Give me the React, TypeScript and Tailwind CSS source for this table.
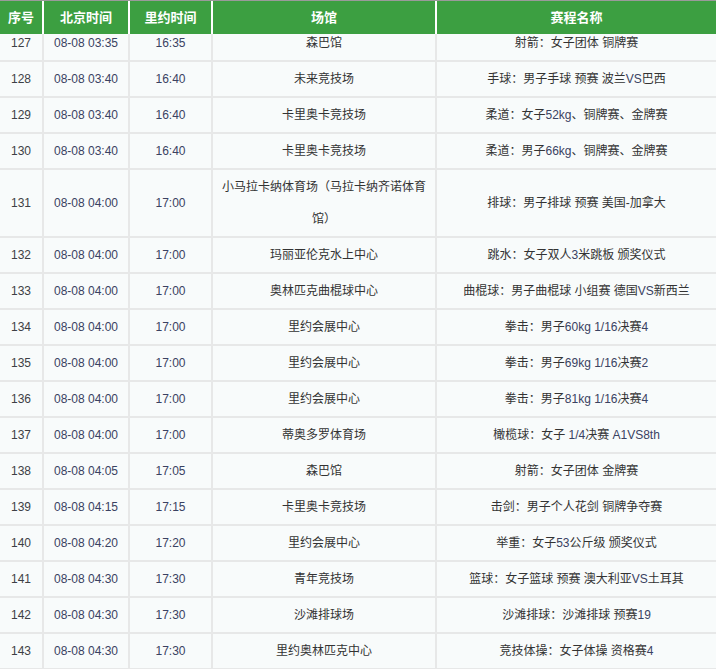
import React from "react";

type Row = [string, string, string, string, string];

const rows: Row[] = [
  ["127", "08-08 03:35", "16:35", "森巴馆", "射箭：女子团体 铜牌赛"],
  ["128", "08-08 03:40", "16:40", "未来竞技场", "手球：男子手球 预赛 波兰VS巴西"],
  ["129", "08-08 03:40", "16:40", "卡里奥卡竞技场", "柔道：女子52kg、铜牌赛、金牌赛"],
  ["130", "08-08 03:40", "16:40", "卡里奥卡竞技场", "柔道：男子66kg、铜牌赛、金牌赛"],
  ["131", "08-08 04:00", "17:00", "小马拉卡纳体育场（马拉卡纳齐诺体育馆）", "排球：男子排球 预赛 美国-加拿大"],
  ["132", "08-08 04:00", "17:00", "玛丽亚伦克水上中心", "跳水：女子双人3米跳板 颁奖仪式"],
  ["133", "08-08 04:00", "17:00", "奥林匹克曲棍球中心", "曲棍球：男子曲棍球 小组赛 德国VS新西兰"],
  ["134", "08-08 04:00", "17:00", "里约会展中心", "拳击：男子60kg 1/16决赛4"],
  ["135", "08-08 04:00", "17:00", "里约会展中心", "拳击：男子69kg 1/16决赛2"],
  ["136", "08-08 04:00", "17:00", "里约会展中心", "拳击：男子81kg 1/16决赛4"],
  ["137", "08-08 04:00", "17:00", "蒂奥多罗体育场", "橄榄球：女子 1/4决赛 A1VS8th"],
  ["138", "08-08 04:05", "17:05", "森巴馆", "射箭：女子团体 金牌赛"],
  ["139", "08-08 04:15", "17:15", "卡里奥卡竞技场", "击剑：男子个人花剑 铜牌争夺赛"],
  ["140", "08-08 04:20", "17:20", "里约会展中心", "举重：女子53公斤级 颁奖仪式"],
  ["141", "08-08 04:30", "17:30", "青年竞技场", "篮球：女子篮球 预赛 澳大利亚VS土耳其"],
  ["142", "08-08 04:30", "17:30", "沙滩排球场", "沙滩排球：沙滩排球 预赛19"],
  ["143", "08-08 04:30", "17:30", "里约奥林匹克中心", "竞技体操：女子体操 资格赛4"],
];

function Mixed({ text }: { text: string }) {
  const parts = text.match(/[A-Za-z0-9/]+|[^A-Za-z0-9/]+/g) || [];
  return (
    <>
      {parts.map((p, i) =>
        /^[A-Za-z0-9/]+$/.test(p) ? (
          <span key={i} className="text-[#3a4262]">
            {p}
          </span>
        ) : (
          <span key={i}>{p}</span>
        )
      )}
    </>
  );
}

const cols = "grid grid-cols-[42px_84px_81px_222px_279px] gap-x-[2px]";
const font = { fontFamily: '"Liberation Sans", "Noto Sans CJK SC", sans-serif' };
const cell =
  "bg-[#f8fbfb] text-[12px] leading-[32px] py-px flex items-center justify-center text-center";

export default function App() {
  return (
    <div className="w-[716px] h-[669px] overflow-hidden bg-white" style={font}>
      <div className={`${cols} h-[34px] bg-white border-t border-[#9a9a9a]`}>
        {["序号", "北京时间", "里约时间", "场馆", "赛程名称"].map((h) => (
          <div
            key={h}
            className="bg-[#3c9f41] text-white font-bold text-[13px] flex items-center justify-center"
          >
            {h}
          </div>
        ))}
      </div>
      <div className="overflow-hidden">
        <div className="-mt-[8px] flex flex-col gap-y-[2px] bg-[#e7e8e8] pb-[2px]">
          {rows.map((r) => (
            <div key={r[0]} className={cols}>
              <div className={`${cell} text-[#3d3f45]`}>{r[0]}</div>
              <div className={`${cell} text-[#3a4262]`}>{r[1]}</div>
              <div className={`${cell} text-[#3a4262]`}>{r[2]}</div>
              <div className={`${cell} px-[8px] text-[#333333]`}>
                <span>{r[3]}</span>
              </div>
              <div className={`${cell} px-[8px] text-[#333333]`}>
                <span>
                  <Mixed text={r[4]} />
                </span>
              </div>
            </div>
          ))}
        </div>
      </div>
    </div>
  );
}
